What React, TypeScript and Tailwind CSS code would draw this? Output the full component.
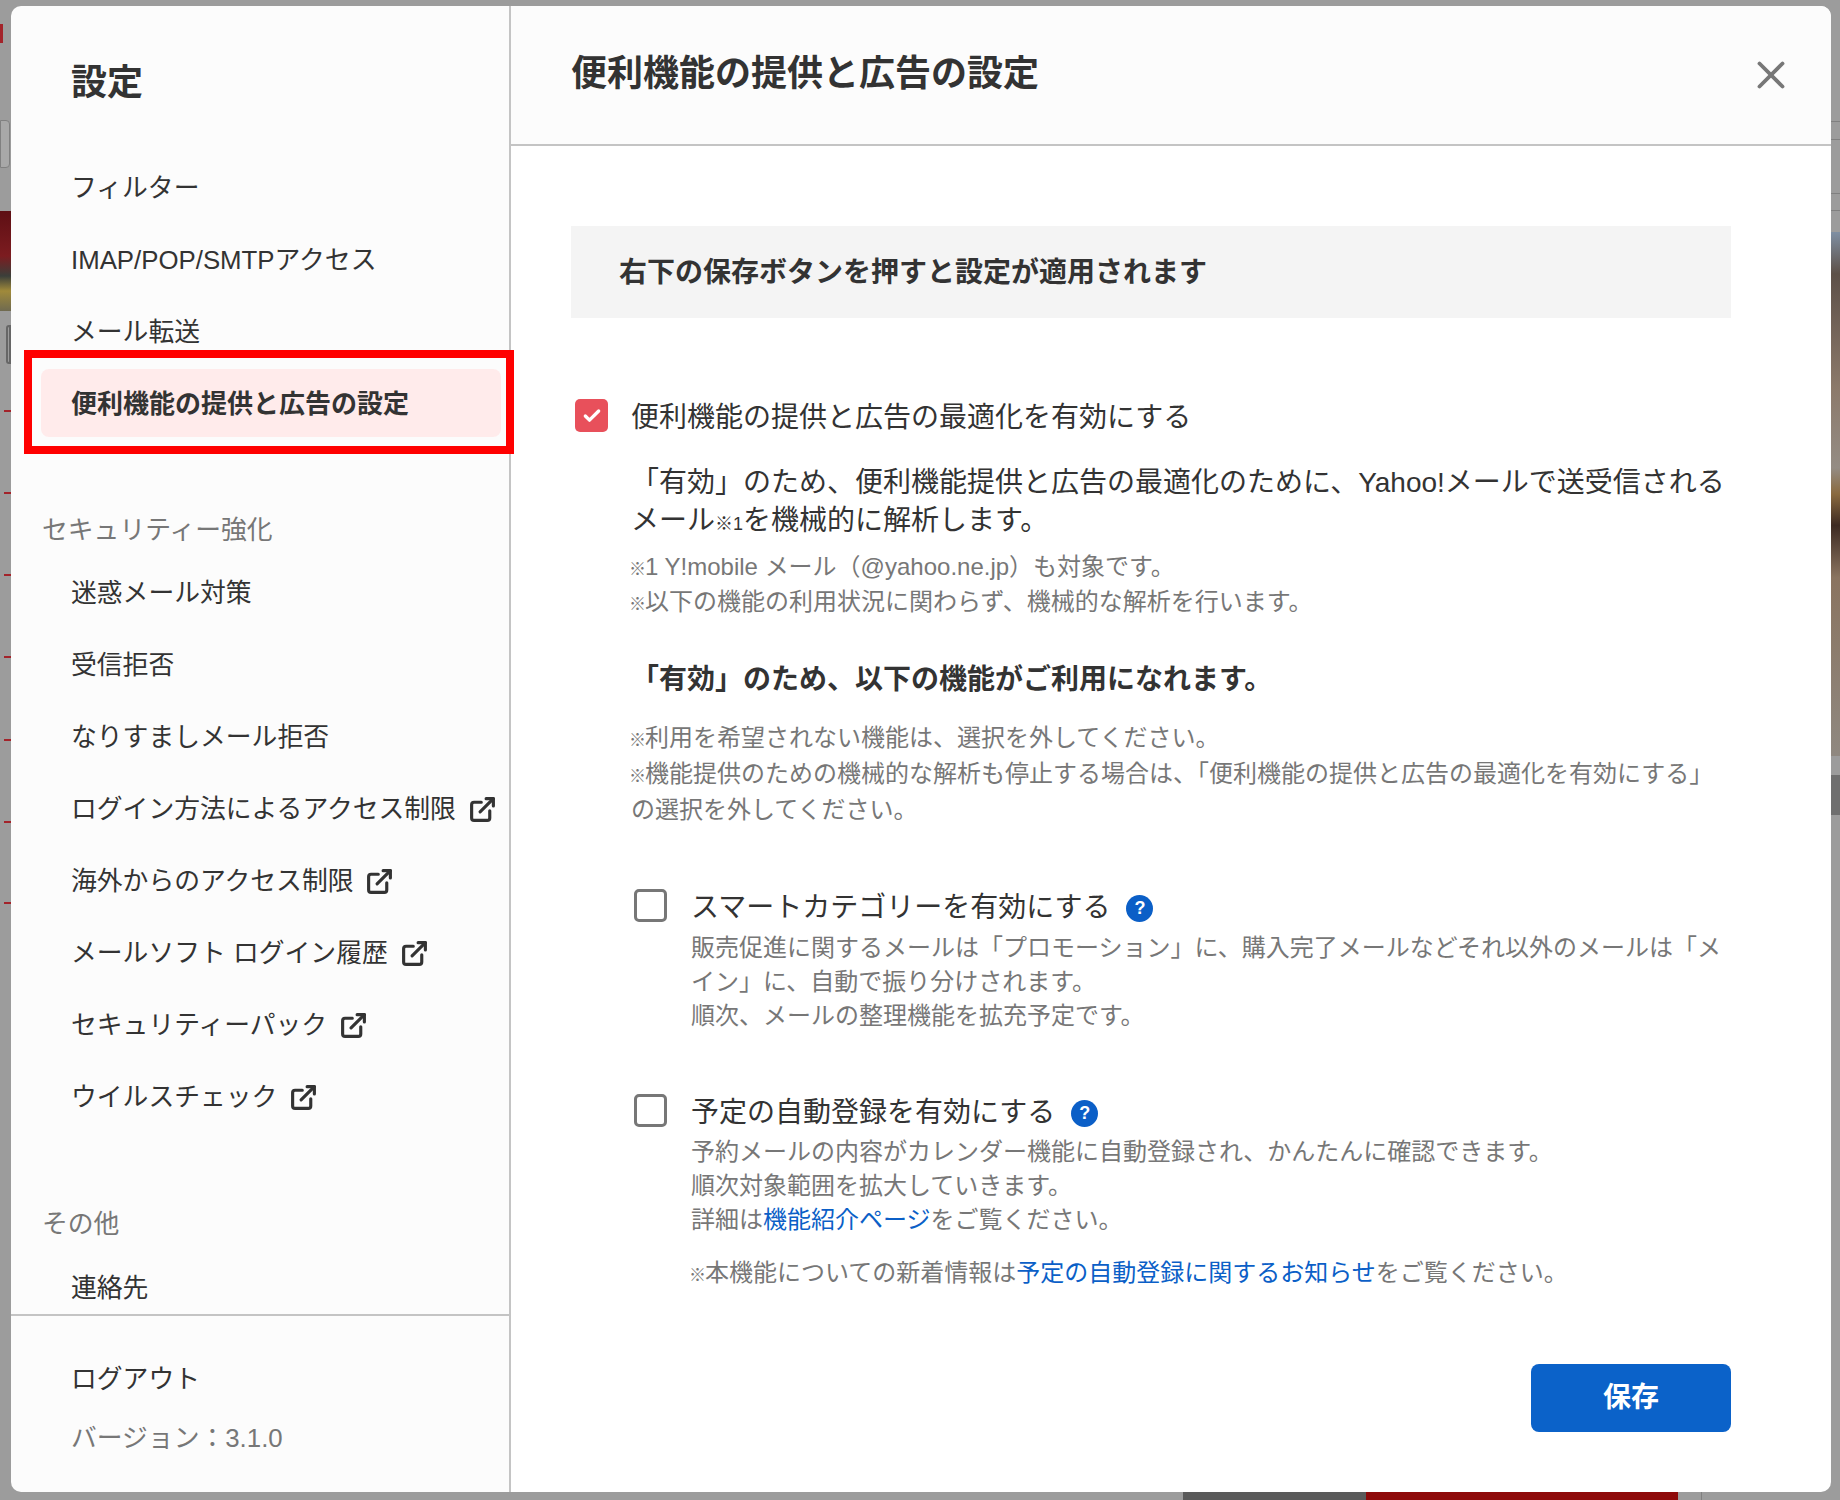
import { ExternalLink, X, Check } from "lucide-react";

const topItems = ["フィルター", "IMAP/POP/SMTPアクセス", "メール転送"];

const securityItems = [
  { label: "迷惑メール対策", external: false },
  { label: "受信拒否", external: false },
  { label: "なりすましメール拒否", external: false },
  { label: "ログイン方法によるアクセス制限", external: true },
  { label: "海外からのアクセス制限", external: true },
  { label: "メールソフト ログイン履歴", external: true },
  { label: "セキュリティーパック", external: true },
  { label: "ウイルスチェック", external: true },
];

const mailRowTicks = [410, 492, 574, 656, 739, 821, 902];

function NavItem({ label, external }: { label: string; external?: boolean }) {
  return (
    <div className="flex h-[72px] items-center gap-[12px] pl-[60px] text-[25.8px] text-[#333333] whitespace-nowrap">
      <span>{label}</span>
      {external && <ExternalLink className="h-[29px] w-[29px]" strokeWidth={2.6} />}
    </div>
  );
}

function Sidebar() {
  return (
    <aside className="flex w-[500px] shrink-0 flex-col border-r-2 border-[#c4c4c4] bg-[#fcfcfc]">
      <div className="flex-1 overflow-hidden">
        <h2 className="pl-[60px] pt-[55px] text-[36px] leading-[44px] font-bold text-[#333333]">設定</h2>
        <div className="mt-[47px]">
          {topItems.map((label) => (
            <NavItem key={label} label={label} />
          ))}
          <div className="ml-[30px] mr-[8px] mt-[1px] flex h-[68px] items-center rounded-[8px] bg-[#ffebeb] pl-[30px] pt-[2px] text-[26px] font-bold text-[#333333] whitespace-nowrap">
            便利機能の提供と広告の設定
          </div>
        </div>
        <h3 className="mt-[75px] pl-[31px] text-[25.8px] leading-[36px] text-[#777777]">セキュリティー強化</h3>
        <div className="mt-[9px]">
          {securityItems.map((item) => (
            <NavItem key={item.label} label={item.label} external={item.external} />
          ))}
        </div>
        <h3 className="mt-[73px] pl-[31px] text-[25.8px] leading-[36px] text-[#777777]">その他</h3>
        <div className="mt-[10px]">
          <NavItem label="連絡先" />
        </div>
      </div>
      <div className="h-[178px] border-t-2 border-[#c4c4c4] pt-[45px]">
        <div className="pl-[60px] text-[25.8px] leading-[36px] text-[#333333]">ログアウト</div>
        <div className="mt-[23px] pl-[60px] text-[25.8px] leading-[36px] text-[#777777]">バージョン：3.1.0</div>
      </div>
    </aside>
  );
}

function Checkbox({ checked }: { checked?: boolean }) {
  if (checked) {
    return (
      <span className="flex h-[33px] w-[33px] shrink-0 items-center justify-center rounded-[5px] bg-[#e8505b]">
        <Check className="h-[20px] w-[20px] text-white" strokeWidth={4} />
      </span>
    );
  }
  return <span className="h-[33px] w-[33px] shrink-0 rounded-[5px] border-[3px] border-[#777777] bg-white" />;
}

function HelpIcon() {
  return (
    <span className="ml-[16px] flex h-[27px] w-[27px] items-center justify-center rounded-full bg-[#0b5fc7] text-[18px] leading-none font-bold text-white">
      ?
    </span>
  );
}

function Kome({ size = "small" }: { size?: "small" | "inline" }) {
  return (
    <span className={size === "small" ? "-ml-[2px] -mr-[1px] text-[17px] leading-none font-bold" : "text-[18px] leading-none font-bold"}>
      ※
    </span>
  );
}

function Main() {
  return (
    <main className="flex min-w-0 flex-1 flex-col bg-white">
      <header className="flex h-[140px] shrink-0 items-center justify-between border-b-2 border-[#c4c4c4] bg-[#fcfcfc] pb-[2px] pl-[60px] pr-[37px]">
        <h1 className="text-[36px] font-bold text-[#333333] whitespace-nowrap">便利機能の提供と広告の設定</h1>
        <X className="mt-[2px] h-[46px] w-[46px] text-[#777777]" strokeWidth={2} />
      </header>

      <div className="flex flex-1 flex-col pl-[60px] pr-[100px] pt-[80px]">
        <div className="flex h-[92px] items-center bg-[#f4f4f4] pl-[48px] pt-[1px] text-[28px] font-bold text-[#333333] whitespace-nowrap">
          右下の保存ボタンを押すと設定が適用されます
        </div>

        <div className="mt-[81px] flex items-start gap-[23px] pl-[4px]">
          <Checkbox checked />
          <span className="mt-[2px] text-[28px] leading-[34px] text-[#333333] whitespace-nowrap">
            便利機能の提供と広告の最適化を有効にする
          </span>
        </div>

        <div className="pl-[60px]">
          <p className="mt-[29px] text-[28px] leading-[38px] text-[#333333] whitespace-nowrap">
            <span className="block">「有効」のため、便利機能提供と広告の最適化のために、Yahoo!メールで送受信される</span>
            <span className="block">メール<Kome size="inline" /><span className="text-[18px] leading-none">1</span>を機械的に解析します。</span>
          </p>
          <p className="mt-[9px] text-[24px] leading-[35px] text-[#777777] whitespace-nowrap">
            <span className="block"><Kome />1 Y!mobile メール（@yahoo.ne.jp）も対象です。</span>
            <span className="block"><Kome />以下の機能の利用状況に関わらず、機械的な解析を行います。</span>
          </p>
          <p className="mt-[42px] text-[28px] leading-[38px] font-bold text-[#333333] whitespace-nowrap">
            「有効」のため、以下の機能がご利用になれます。
          </p>
          <p className="mt-[21px] text-[24px] leading-[36px] text-[#777777] whitespace-nowrap">
            <span className="block"><Kome />利用を希望されない機能は、選択を外してください。</span>
            <span className="block"><Kome />機能提供のための機械的な解析も停止する場合は、「便利機能の提供と広告の最適化を有効にする」</span>
            <span className="block">の選択を外してください。</span>
          </p>

          <div className="mt-[61px] flex gap-[24px] pl-[3px]">
            <Checkbox />
            <div>
              <div className="mt-[2px] flex h-[34px] items-center text-[28px] text-[#333333] whitespace-nowrap">
                スマートカテゴリーを有効にする
                <HelpIcon />
              </div>
              <p className="mt-[6px] text-[24px] leading-[34px] text-[#777777] whitespace-nowrap">
                <span className="block">販売促進に関するメールは「プロモーション」に、購入完了メールなどそれ以外のメールは「メ</span>
                <span className="block">イン」に、自動で振り分けされます。</span>
                <span className="block">順次、メールの整理機能を拡充予定です。</span>
              </p>
            </div>
          </div>

          <div className="mt-[61px] flex gap-[24px] pl-[3px]">
            <Checkbox />
            <div>
              <div className="mt-[2px] flex h-[34px] items-center text-[28px] text-[#333333] whitespace-nowrap">
                予定の自動登録を有効にする
                <HelpIcon />
              </div>
              <p className="mt-[5px] text-[24px] leading-[34px] text-[#777777] whitespace-nowrap">
                <span className="block">予約メールの内容がカレンダー機能に自動登録され、かんたんに確認できます。</span>
                <span className="block">順次対象範囲を拡大していきます。</span>
                <span className="block">詳細は<a className="text-[#0b5fc7]">機能紹介ページ</a>をご覧ください。</span>
              </p>
              <p className="mt-[19px] text-[24px] leading-[34px] text-[#777777] whitespace-nowrap">
                <Kome />本機能についての新着情報は<a className="text-[#0b5fc7]">予定の自動登録に関するお知らせ</a>をご覧ください。
              </p>
            </div>
          </div>
        </div>

        <div className="mt-[74px] flex justify-end">
          <button
            type="button"
            className="h-[68px] w-[200px] rounded-[8px] bg-[#0b62c9] text-[28px] font-bold text-white"
          >
            保存
          </button>
        </div>
      </div>
    </main>
  );
}

// the dimmed mail page that shows around the modal's edges
function DimmedPage() {
  return (
    <>
      <div className="absolute left-0 top-[24px] h-[19px] w-[3px] bg-[#a3232a]" />
      <div className="absolute left-0 top-[120px] h-[48px] w-[10px] rounded-r-[4px] border border-[#808080] bg-[#a8a8a8]" />
      <div className="absolute left-0 top-[211px] h-[100px] w-[11px] bg-[linear-gradient(180deg,#5e0f14_0%,#7c1c20_45%,#3b3f3a_65%,#a08a3a_80%,#6f6a50_100%)]" />
      <div className="absolute left-[6px] top-[325px] h-[39px] w-[5px] rounded-l-[3px] border-2 border-[#666666]" />
      {mailRowTicks.map((top) => (
        <div key={top} className="absolute left-[4px] h-[2px] w-[7px] bg-[#a3232a]" style={{ top }} />
      ))}
      <div className="absolute right-0 top-[121px] h-[1px] w-[9px] bg-[#808080]" />
      <div className="absolute right-0 top-[139px] h-[1px] w-[9px] bg-[#808080]" />
      <div className="absolute right-0 top-[193px] h-[1px] w-[9px] bg-[#808080]" />
      <div className="absolute right-0 top-[210px] h-[1px] w-[9px] bg-[#808080]" />
      <div className="absolute right-0 top-[232px] h-[524px] w-[9px] bg-[linear-gradient(180deg,#7f8fa3_0%,#5d5048_8%,#8c7a6b_30%,#948c84_45%,#8a6a3f_50%,#3d2a22_56%,#8a7460_66%,#8f8880_100%)]" />
      <div className="absolute right-0 top-[775px] h-[40px] w-[9px] bg-[#6f6f6f]" />
      <div className="absolute bottom-0 left-[1183px] h-[8px] w-[183px] bg-[#5a5a5a]" />
      <div className="absolute bottom-0 left-[1366px] h-[8px] w-[312px] bg-[#8e0a0a]" />
      <div className="absolute bottom-0 left-[1701px] h-[8px] w-[1px] bg-[#808080]" />
    </>
  );
}

export default function App() {
  return (
    <div
      className="relative h-[1500px] w-[1840px] overflow-hidden bg-[#9c9c9c] pb-[8px] pl-[11px] pr-[9px] pt-[6px]"
      style={{ fontFamily: '"Liberation Sans", "Noto Sans CJK JP", sans-serif' }}
    >
      <DimmedPage />
      <div className="relative flex h-full overflow-hidden rounded-[10px]">
        <Sidebar />
        <Main />
      </div>
      {/* annotation drawn over the active menu row */}
      <div className="absolute left-[24px] top-[350px] h-[104px] w-[490px] border-[8px] border-[#ff0000]" />
    </div>
  );
}
